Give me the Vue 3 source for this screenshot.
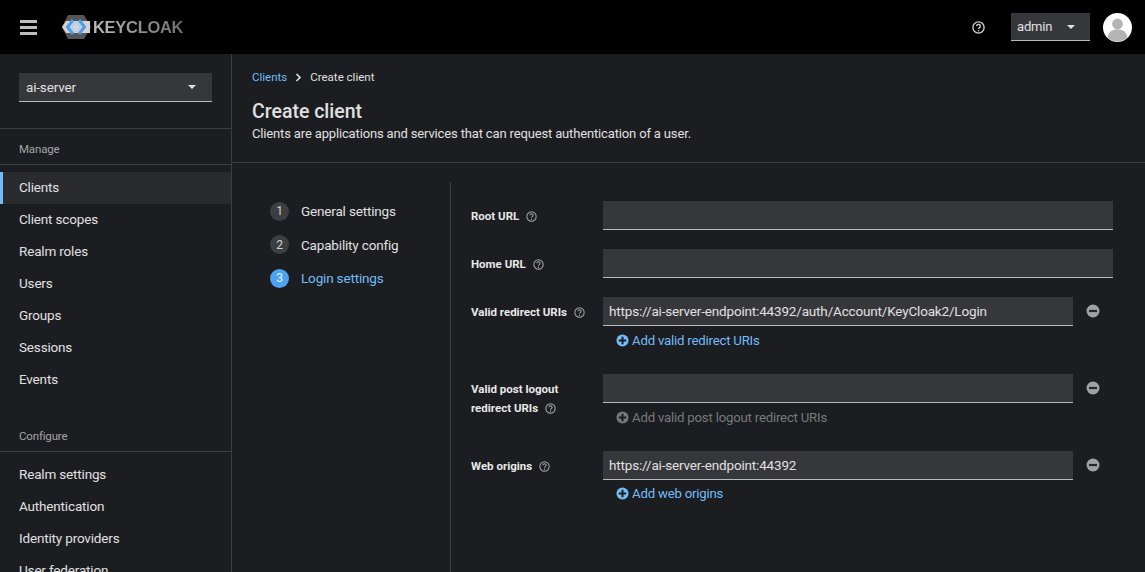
<script setup>
const manage = ['Clients', 'Client scopes', 'Realm roles', 'Users', 'Groups', 'Sessions', 'Events']
const configure = ['Realm settings', 'Authentication', 'Identity providers', 'User federation']
const steps = [
  { n: 1, label: 'General settings' },
  { n: 2, label: 'Capability config' },
  { n: 3, label: 'Login settings', active: true }
]
</script>

<template>
  <div class="page">
    <header class="topbar">
      <div class="burger"><span></span><span></span><span></span></div>
      <div class="logo">
        <svg class="logo-mark" width="36" height="26" viewBox="0 0 36 26">
          <polygon points="7,1 23,1 30,13 23,25 7,25 1,13" fill="#555" />
          <polygon points="1,13 5,7 29,7 29,19 5,19" fill="#d4d4d4" />
          <path d="M12 6 L6.500 13 L12 20 M18 6 L23.500 13 L18 20" fill="none" stroke="#4d9de8" stroke-width="3" />
          <path d="M14.500 8 L10.500 13 L14.500 18 M15.500 8 L19.500 13 L15.500 18" fill="none" stroke="#a7d0f5" stroke-width="1.400" />
        </svg>
        <span class="logo-text">KEYCLOAK</span>
      </div>
      <div class="top-right">
        <svg class="top-help" width="13" height="13" viewBox="0 0 16 16">
          <circle cx="8" cy="8" r="6.900" fill="none" stroke="#d2d2d2" stroke-width="1.600" />
          <path d="M5.700 6.300a2.300 2.200 0 1 1 3.500 1.900c-.8.500-1.200.9-1.200 1.700" fill="none" stroke="#d2d2d2" stroke-width="1.600" />
          <circle cx="8" cy="12" r="1" fill="#d2d2d2" />
        </svg>
        <div class="user-select"><span>admin</span><i class="caret"></i></div>
        <svg class="avatar" width="29" height="29" viewBox="0 0 29 29">
          <circle cx="14.500" cy="14.500" r="14.500" fill="#fff" />
          <circle cx="14.500" cy="11" r="5.400" fill="#b4b4b4" />
          <path d="M4.600 24.500c.6-5.400 4-8 9.900-8s9.300 2.600 9.900 8a14.500 14.500 0 0 1-19.800 0z" fill="#b4b4b4" />
        </svg>
      </div>
    </header>

    <div class="body">
      <aside class="sidebar">
        <div class="realm-wrap">
          <div class="realm-select"><span>ai-server</span><i class="caret"></i></div>
        </div>
        <div class="nav-title first">Manage</div>
        <nav class="nav">
          <a v-for="(item, i) in manage" :key="item" class="nav-item" :class="{ current: i === 0 }">{{ item }}</a>
        </nav>
        <div class="nav-title second">Configure</div>
        <nav class="nav">
          <a v-for="item in configure" :key="item" class="nav-item">{{ item }}</a>
        </nav>
      </aside>

      <main class="main">
        <section class="head">
          <div class="crumbs">
            <a class="link">Clients</a>
            <svg class="chev" width="7" height="9" viewBox="0 0 7 9"><path d="M1.500 1 L5 4.500 L1.500 8" fill="none" stroke="#e0e0e0" stroke-width="1.600" /></svg>
            <span>Create client</span>
          </div>
          <h1>Create client</h1>
          <p>Clients are applications and services that can request authentication of a user.</p>
        </section>

        <section class="wizard">
          <ol class="steps">
            <li v-for="s in steps" :key="s.n" class="step" :class="{ active: s.active }">
              <span class="num">{{ s.n }}</span>
              <span>{{ s.label }}</span>
            </li>
          </ol>

          <form class="form" @submit.prevent>
            <div class="row row-root">
              <label class="lab">Root URL<svg class="help" viewBox="0 0 16 16"><use href="#q" /></svg></label>
              <div class="field"><div class="input"></div></div>
            </div>
            <div class="row row-home">
              <label class="lab">Home URL<svg class="help" viewBox="0 0 16 16"><use href="#q" /></svg></label>
              <div class="field"><div class="input"></div></div>
            </div>
            <div class="row row-redirect">
              <label class="lab">Valid redirect URIs<svg class="help" viewBox="0 0 16 16"><use href="#q" /></svg></label>
              <div class="field">
                <div class="multi">
                  <div class="input">https://ai-server-endpoint:44392/auth/Account/KeyCloak2/Login</div>
                  <svg class="minus" viewBox="0 0 14 14"><use href="#m" /></svg>
                </div>
                <a class="add"><svg class="plus" viewBox="0 0 14 14"><use href="#p" /></svg>Add valid redirect URIs</a>
              </div>
            </div>
            <div class="row row-logout">
              <label class="lab two">Valid post logout<br />redirect URIs<svg class="help" viewBox="0 0 16 16"><use href="#q" /></svg></label>
              <div class="field">
                <div class="multi">
                  <div class="input"></div>
                  <svg class="minus" viewBox="0 0 14 14"><use href="#m" /></svg>
                </div>
                <a class="add disabled"><svg class="plus" viewBox="0 0 14 14"><use href="#p" /></svg>Add valid post logout redirect URIs</a>
              </div>
            </div>
            <div class="row">
              <label class="lab">Web origins<svg class="help" viewBox="0 0 16 16"><use href="#q" /></svg></label>
              <div class="field">
                <div class="multi">
                  <div class="input">https://ai-server-endpoint:44392</div>
                  <svg class="minus" viewBox="0 0 14 14"><use href="#m" /></svg>
                </div>
                <a class="add last"><svg class="plus" viewBox="0 0 14 14"><use href="#p" /></svg>Add web origins</a>
              </div>
            </div>
          </form>
        </section>
      </main>
    </div>

    <svg class="defs" width="0" height="0">
      <defs>
        <g id="q">
          <circle cx="8" cy="8" r="6.800" fill="none" stroke="currentColor" stroke-width="1.500" />
          <path d="M5.700 6.300a2.300 2.200 0 1 1 3.500 1.900c-.8.500-1.200.9-1.200 1.700" fill="none" stroke="currentColor" stroke-width="1.500" />
          <circle cx="8" cy="12" r="1" fill="currentColor" />
        </g>
        <g id="m">
          <circle cx="7" cy="7" r="6.500" fill="#a0a1a3" />
          <rect x="3" y="5.900" width="8" height="2.200" fill="#25272b" />
        </g>
        <g id="p">
          <circle cx="7" cy="7" r="6.500" fill="currentColor" />
          <path d="M3 7h8M7 3v8" stroke="#1b1d21" stroke-width="2.200" />
        </g>
      </defs>
    </svg>
  </div>
</template>

<style>
html, body { margin: 0; background: #1b1d21; overflow: hidden; }
</style>

<style scoped>
.page {
  width: 1145px;
  height: 572px;
  overflow: hidden;
  background: #1b1d21;
  color: #e0e0e0;
  font-family: Roboto, "Noto Sans", sans-serif;
  font-size: 13.500px;
  letter-spacing: -0.17px;
  position: relative;
}
.defs { position: absolute; }
.topbar {
  height: 54px;
  background: #000;
  display: flex;
  align-items: center;
  padding-left: 20px;
  box-sizing: border-box;
}
.burger { width: 17px; display: flex; flex-direction: column; gap: 3px; margin-right: 24px; }
.burger span { display: block; height: 3px; background: #bdbdbd; }
.logo { display: flex; align-items: center; }
.logo-text {
  font-family: "Liberation Sans", sans-serif;
  font-weight: 700;
  font-size: 16.500px;
  letter-spacing: -0.3px;
  margin-left: -4px;
  background: linear-gradient(90deg, #bcbcbc 0%, #8a8a8a 60%, #6e6e6e 100%);
  -webkit-background-clip: text;
  background-clip: text;
  color: transparent;
}
.top-right { margin-left: auto; display: flex; align-items: center; padding-right: 13px; }
.top-help { margin-right: 26px; }
.user-select {
  width: 79px;
  height: 28px;
  box-sizing: border-box;
  background: #36373b;
  border-bottom: 1px solid #b8bbbe;
  display: flex;
  align-items: center;
  justify-content: space-between;
  padding: 0 15px 0 6px;
  margin-right: 13px;
  font-size: 13px;
}
.caret {
  width: 0;
  height: 0;
  border-left: 4px solid transparent;
  border-right: 4px solid transparent;
  border-top: 4px solid #e0e0e0;
}
.body { display: flex; height: 518px; }
.sidebar {
  width: 232px;
  flex: none;
  box-sizing: border-box;
  border-right: 1px solid #3c3f42;
  overflow: hidden;
}
.realm-wrap {
  height: 75px;
  padding: 19px 19px 0;
  box-sizing: border-box;
  border-bottom: 1px solid #3c3f42;
}
.realm-select {
  height: 29px;
  box-sizing: border-box;
  background: #36373b;
  border-bottom: 1px solid #b8bbbe;
  display: flex;
  align-items: center;
  justify-content: space-between;
  padding: 0 16px 0 7px;
  width: 193px;
}
.nav-title {
  font-size: 11.500px;
  color: #a3a5a8;
  padding: 0 0 8px 19px;
  line-height: 15px;
  border-bottom: 1px solid #3c3f42;
  margin-bottom: 7px;
}
.nav-title.first { padding-top: 13px; padding-bottom: 7px; }
.nav-title.second { padding-top: 33px; padding-bottom: 7px; }
.nav { display: flex; flex-direction: column; }
.nav-item {
  height: 32px;
  line-height: 30px;
  padding-left: 19px;
  color: #e0e0e0;
  box-sizing: border-box;
}
.nav-item.current {
  background: #292b2f;
  box-shadow: inset 3px 0 0 #73bcf7;
}
.main { flex: 1; min-width: 0; }
.head {
  height: 109px;
  box-sizing: border-box;
  padding: 16px 20px 0;
  border-bottom: 1px solid #3c3f42;
}
.crumbs { display: flex; align-items: center; font-size: 11.500px; line-height: 14px; color: #e0e0e0; letter-spacing: 0; }
.link { color: #73bcf7; }
.chev { margin: 0 8px 0 8px; }
h1 {
  margin: 15px 0 0;
  font-size: 19.500px;
  line-height: 26px;
  font-weight: 500;
  color: #e0e0e0;
  letter-spacing: 0;
}
.head p { margin: 0; line-height: 18px; font-size: 13px; letter-spacing: -0.15px; }
.wizard { display: flex; padding-top: 19px; }
.steps {
  list-style: none;
  margin: 0;
  padding: 19.500px 0 0 38px;
  width: 219px;
  box-sizing: border-box;
  height: 400px;
  border-right: 1px solid #3c3f42;
  display: flex;
  flex-direction: column;
  gap: 14px;
}
.step { display: flex; align-items: center; height: 19.500px; gap: 12px; }
.num {
  width: 19px;
  height: 19px;
  border-radius: 50%;
  background: #3c3f42;
  font-size: 12px;
  display: flex;
  align-items: center;
  justify-content: center;
  color: #d2d2d2;
  letter-spacing: 0;
}
.step.active { color: #73bcf7; }
.step.active .num { background: #4da3ef; color: #e8f2fb; }
.form { flex: 1; min-width: 0; padding: 19px 32px 0 20px; box-sizing: border-box; }
.row { display: grid; grid-template-columns: 132px 1fr; }
.row-root, .row-home { margin-bottom: 19px; }
.row-redirect { margin-bottom: 25px; }
.row-logout { margin-bottom: 25px; }
.lab {
  font-size: 11.500px;
  font-weight: 700;
  color: #e8e8e8;
  line-height: 19px;
  padding-top: 6px;
  letter-spacing: 0;
}
.help { width: 11px; height: 11px; margin-left: 7px; color: #a8a9ab; vertical-align: -2px; }
.input {
  height: 29px;
  box-sizing: border-box;
  background: #36373b;
  border-bottom: 1px solid #b8bbbe;
  line-height: 28px;
  padding: 0 6px;
  flex: 1;
  white-space: nowrap;
  overflow: hidden;
  color: #e0e0e0;
}
.multi { display: flex; align-items: center; }
.multi .input { flex: none; width: 470px; }
.minus { width: 14px; height: 14px; margin-left: 13px; margin-bottom: 1px; }
.add {
  display: flex;
  align-items: center;
  height: 18px;
  margin-top: 5px;
  padding-left: 13px;
  color: #73bcf7;
  font-size: 13.200px;
  letter-spacing: -0.2px;
}
.add.last { margin-top: 4px; }
.add.disabled { color: #77797c; }
.plus { width: 13px; height: 13px; margin-right: 3px; }
</style>
